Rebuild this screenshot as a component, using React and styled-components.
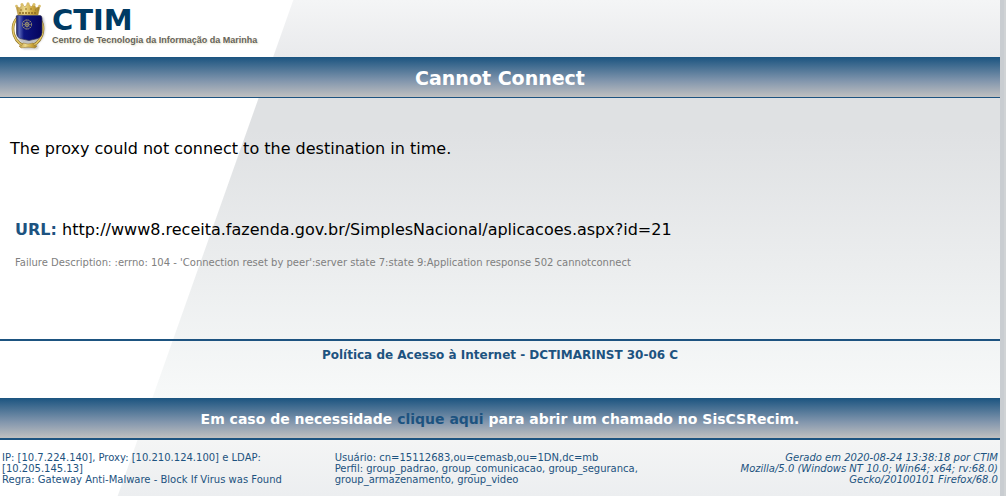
import React from "react";
import styled, { createGlobalStyle } from "styled-components";

const navy = "#1d5380";

const GlobalStyle = createGlobalStyle`
  * { box-sizing: border-box; }
  html { background: linear-gradient(to left, #d0d3d5 2px, #c9cdd1 2px); }
  body {
    margin: 0;
    font-family: Verdana, "DejaVu Sans", sans-serif;
    font-size: 16px;
    color: #000;
  }
  h1, p { margin: 0; }
`;

const Page = styled.div`
  display: flex;
  flex-direction: column;
  min-height: 100vh;
  margin-right: 6px;
  background:
    linear-gradient(109.5deg, #fff 276px, transparent 277px),
    linear-gradient(#f4f5f6 0, #e9eaec 57px, #dfe1e3 98px, #dfe1e3 130px, #f7f9f9 398px, #f4f5f5 440px, #eceef0 496px);
`;

const Header = styled.header`
  display: flex;
  align-items: flex-start;
  height: 57px;
  padding: 2px 11px;
  gap: 5px;
`;

const Crest = styled.svg`
  width: 36px;
  height: 49px;
  flex: none;
`;

const Brand = styled.div`
  display: flex;
  flex-direction: column;
  gap: 2px;
  padding-top: 4px;
`;

const BrandName = styled.div`
  font: 700 29px/28px "DejaVu Sans", Verdana, sans-serif;
  color: #003a63;
`;

const BrandTagline = styled.div`
  font: 700 9px/9px "Liberation Sans", Arial, sans-serif;
  color: #66645a;
  text-shadow: 1px 1px 2px #e4e0c8;
  white-space: nowrap;
`;

const Band = styled.div`
  display: flex;
  align-items: center;
  justify-content: center;
  padding-top: 2px;
  min-height: ${(p) => 40 + p.$line}px;
  border-bottom: ${(p) => p.$line}px solid ${navy};
  background: linear-gradient(#1b5480, #8296ad 60%, #c0c0c0);
  color: #fff;
  font-weight: 700;
  font-size: 14px;
`;

const Title = styled.h1`
  font-size: 19px;
  line-height: 24px;
`;

const BandLink = styled.a`
  color: ${navy};
  text-decoration: none;
`;

const Main = styled.main`
  height: 241px;
  padding: 41px 10px 0;
`;

const Message = styled.p`
  line-height: 20px;
`;

const Details = styled.div`
  padding: 61px 5px 0;
`;

const Url = styled.p`
  line-height: 20px;
  overflow-wrap: anywhere;
  strong { color: ${navy}; }
`;

const Failure = styled.p`
  padding-top: 17px;
  font-size: 10px;
  line-height: 12px;
  color: #808080;
`;

const Policy = styled.div`
  height: 59px;
  padding-top: 7px;
  border-top: 2px solid ${navy};
  text-align: center;
`;

const PolicyLink = styled.a`
  display: block;
  color: ${navy};
  font-size: 12px;
  font-weight: 700;
  line-height: 15px;
  text-decoration: none;
`;

const Footer = styled.footer`
  display: grid;
  grid-template-columns: repeat(3, 1fr);
  padding: 12px 2px 0;
  column-gap: 2px;
  color: ${navy};
  font-size: 10px;
  line-height: 11px;
`;

const FooterCell = styled.div`
  text-align: ${(p) => (p.$right ? "right" : "left")};
  font-style: ${(p) => (p.$right ? "italic" : "normal")};
`;

function CrestIcon() {
  return (
    <Crest viewBox="0 0 36 49" role="img" aria-label="Marinha">
      <defs>
        <linearGradient id="gold" x1="0" x2="1">
          <stop offset="0" stopColor="#b8943a" />
          <stop offset="0.35" stopColor="#ecd98c" />
          <stop offset="0.7" stopColor="#cda73c" />
          <stop offset="1" stopColor="#9a7a28" />
        </linearGradient>
        <linearGradient id="shield" x1="0" x2="1">
          <stop offset="0" stopColor="#10125c" />
          <stop offset="0.12" stopColor="#5a68b8" />
          <stop offset="0.3" stopColor="#0d1580" />
          <stop offset="1" stopColor="#04045c" />
        </linearGradient>
        <filter id="soft" x="-20%" y="-20%" width="140%" height="140%">
          <feGaussianBlur stdDeviation="1.2" />
        </filter>
      </defs>
      <path d="M9 15h23q3 8 1 18q-3 9-14 11q-11-1-13-10z M12 42h15v5H12z" fill="#8c8c8c" opacity="0.55" filter="url(#soft)" />
      <path d="M6 16q-6 7-3 17q4 11 14 11t14-11q3-10-3-17" fill="none" stroke="#8b6d22" strokeWidth="2.6" />
      <path d="M6 16q-6 7-3 17q4 11 14 11t14-11q3-10-3-17" fill="none" stroke="#e2c766" strokeWidth="1.5" />
      <path d="M5 4l4 2 2-4 3 3 3-4 3 4 3-3 2 4 4-2-2 9H7z" fill="url(#gold)" stroke="#b48f38" strokeWidth="0.5" />
      <g fill="#d9bd67">
        <circle cx="11" cy="2.500" r="1.500" />
        <circle cx="17" cy="1.800" r="1.500" />
        <circle cx="23" cy="2.500" r="1.500" />
        <circle cx="5.500" cy="4" r="1.300" />
        <circle cx="28.500" cy="4" r="1.300" />
      </g>
      <path d="M8 11h18" stroke="#8c6a22" strokeWidth="1.500" strokeDasharray="2 1" />
      <path d="M9 8h2M14 7h2M19 7h2M24 8h1" stroke="#967329" />
      <path d="M6 13.500h23q2 0 2 3v14q0 4-4 6l-9 2-9-2q-3.500-2-3.500-5.500v-14.500q-1-3 0.500-3z" fill="url(#shield)" stroke="#383a58" strokeWidth="0.700" />
      <g fill="none" stroke="#aaa06f" strokeWidth="0.900">
        <circle cx="16" cy="22.500" r="4.600" strokeDasharray="1.800 0.600" />
        <circle cx="16" cy="22.500" r="2" />
        <path d="M12.500 19l7 7M19.500 19l-7 7M16 18v9M11.500 22.500h9" strokeWidth="0.500" />
      </g>
      <path d="M12 41q5 2 10 0l1 2 3 1-2 2-7-1-7 1-2-2 3-1z" fill="url(#gold)" stroke="#9a782b" strokeWidth="0.500" />
    </Crest>
  );
}

export default function App() {
  return (
    <>
      <GlobalStyle />
      <Page>
        <Header>
          <CrestIcon />
          <Brand>
            <BrandName>CTIM</BrandName>
            <BrandTagline>Centro de Tecnologia da Informação da Marinha</BrandTagline>
          </Brand>
        </Header>
        <Band $line={1}>
          <Title>Cannot Connect</Title>
        </Band>
        <Main>
          <Message>The proxy could not connect to the destination in time.</Message>
          <Details>
            <Url>
              <strong>URL:</strong> http://www8.receita.fazenda.gov.br/SimplesNacional/aplicacoes.aspx?id=21
            </Url>
            <Failure>
              Failure Description: :errno: 104 - 'Connection reset by peer':server state 7:state 9:Application response 502 cannotconnect
            </Failure>
          </Details>
        </Main>
        <Policy>
          <PolicyLink href="#politica">Política de Acesso à Internet - DCTIMARINST 30-06 C</PolicyLink>
        </Policy>
        <Band $line={2}>
          <p>
            Em caso de necessidade <BandLink href="#chamado">clique aqui</BandLink> para abrir um chamado no SisCSRecim.
          </p>
        </Band>
        <Footer>
          <FooterCell>
            IP: [10.7.224.140], Proxy: [10.210.124.100] e LDAP: [10.205.145.13]
            <br />
            Regra: Gateway Anti-Malware - Block If Virus was Found
          </FooterCell>
          <FooterCell>
            Usuário: cn=15112683,ou=cemasb,ou=1DN,dc=mb
            <br />
            Perfil: group_padrao, group_comunicacao, group_seguranca, group_armazenamento, group_video
          </FooterCell>
          <FooterCell $right>
            Gerado em 2020-08-24 13:38:18 por CTIM
            <br />
            Mozilla/5.0 (Windows NT 10.0; Win64; x64; rv:68.0) Gecko/20100101 Firefox/68.0
          </FooterCell>
        </Footer>
      </Page>
    </>
  );
}
